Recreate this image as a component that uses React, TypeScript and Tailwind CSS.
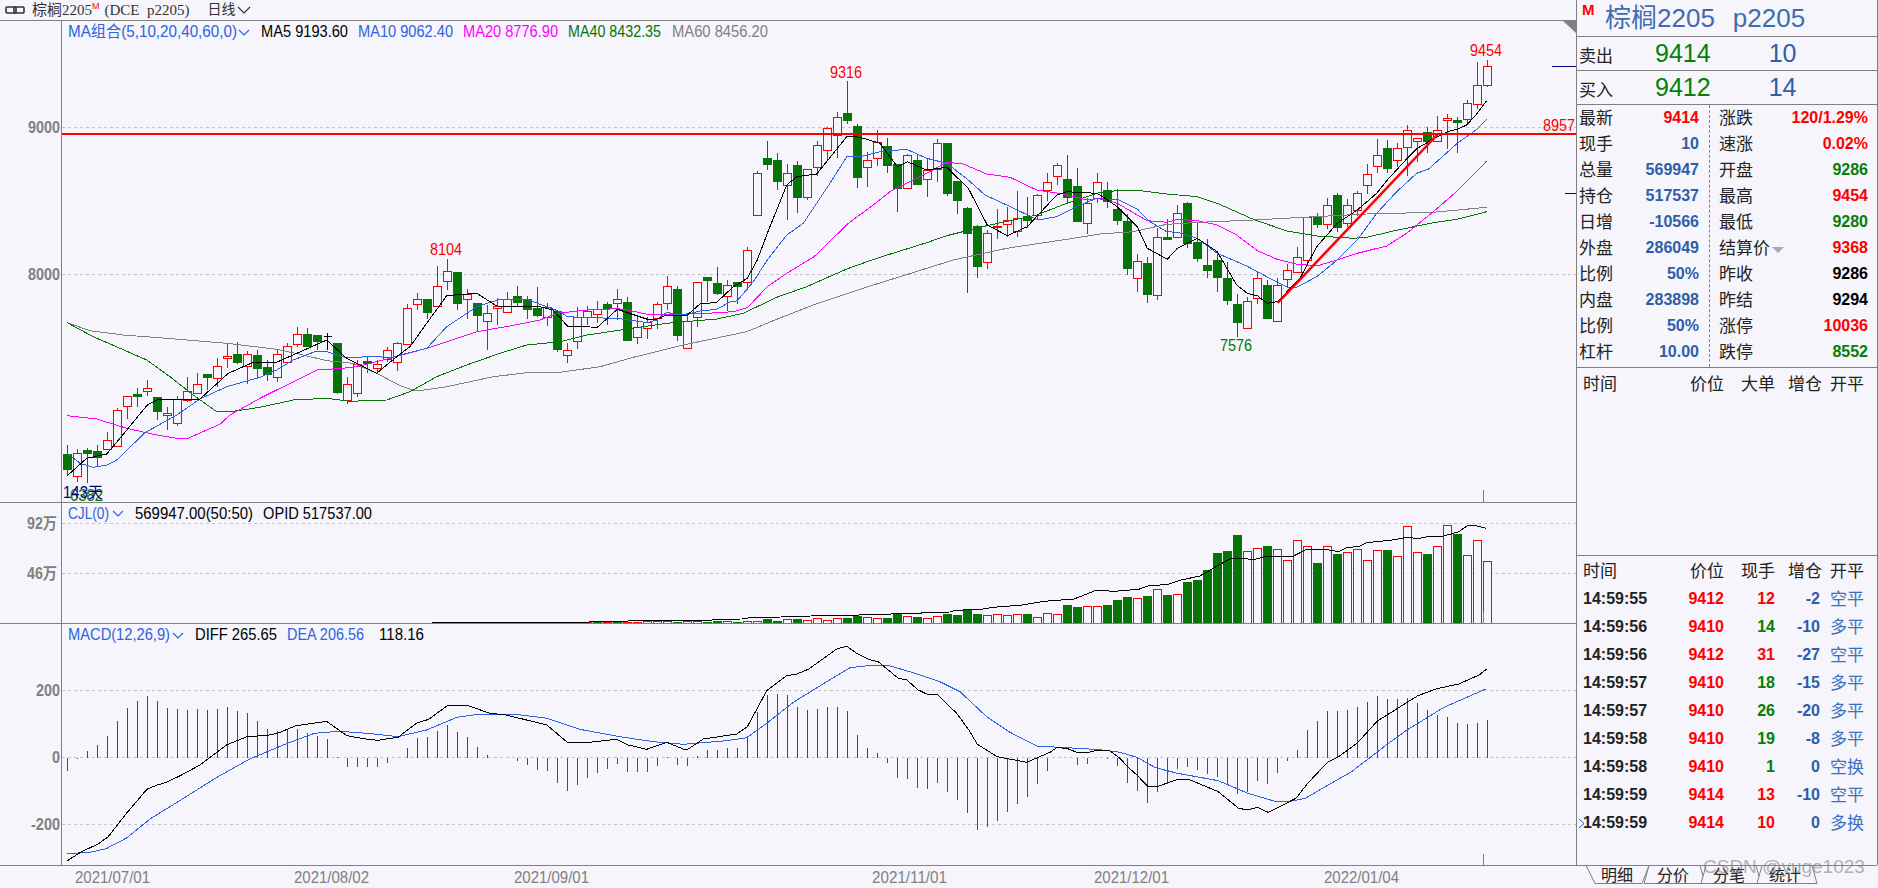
import type { ReactNode } from 'react';

const BG = '#f5f5fb';
const AXIS = '#808080';
const GRID = '#c4c4c4';
const RED = '#ff0000';
const GREEN = '#067406';
const BLUE = '#2f62e0';

// [high, bodyTop, bodyBottom, low, type] in page pixels; type 1 = up, 0 = down, 2 = doji
const candles: number[][] = [
  [445,454,469,475,0],[449,453,476,482,1],[448,450,453,483,0],[445,451,457,467,0],[432,440,449,449,1],
  [408,410,446,447,1],[396,396,406,419,1],[388,394,396,407,0],[380,388,391,396,1],[397,397,411,420,0],
  [407,413,415,430,1],[396,399,423,426,1],[377,391,400,402,1],[373,384,393,393,1],[374,374,377,390,0],
  [358,366,378,387,1],[344,356,358,368,1],[342,354,362,364,0],[351,354,366,384,1],[350,355,368,377,0],
  [360,367,374,381,0],[350,354,377,382,1],[343,346,362,364,1],[327,334,344,347,1],[328,334,346,346,0],
  [335,335,341,350,0],[333,336,336,350,2],[343,343,392,394,0],[377,384,400,404,1],[360,364,393,397,1],
  [356,361,363,373,0],[360,364,368,374,1],[347,350,359,362,1],[342,343,362,371,1],[304,308,344,345,1],
  [293,299,304,310,1],[299,299,312,319,0],[266,286,306,307,1],[259,271,281,290,1],[272,272,303,310,0],
  [289,294,299,319,1],[303,303,315,332,0],[305,313,321,350,1],[298,306,308,325,1],[292,299,312,312,1],
  [286,296,302,306,0],[296,299,309,319,0],[287,308,315,317,0],[303,307,317,326,1],[311,311,349,352,0],
  [343,350,355,363,1],[307,317,341,349,1],[306,311,317,325,1],[301,309,314,323,1],[302,304,308,325,0],
  [289,299,303,320,1],[297,302,340,340,0],[317,327,337,344,1],[317,322,328,339,1],[302,304,318,329,1],
  [276,286,303,310,1],[286,289,335,341,0],[315,321,348,349,1],[282,282,317,327,1],[277,277,280,302,0],
  [267,283,293,295,0],[280,285,296,311,1],[282,282,286,304,0],[247,250,282,290,1],[171,173,215,215,1],
  [141,158,164,170,0],[153,160,181,190,0],[164,173,185,220,1],[161,165,197,213,0],[169,169,197,200,1],
  [141,145,167,176,1],[127,128,150,161,1],[112,117,135,158,1],[81,113,120,124,0],[124,126,177,188,0],
  [152,160,167,187,1],[130,142,158,166,1],[138,146,165,173,0],[164,164,188,212,0],[154,155,188,189,1],
  [154,160,184,184,0],[158,170,179,197,1],[139,143,169,182,1],[143,143,193,196,0],[181,181,200,214,0],
  [207,208,233,293,0],[225,226,266,278,0],[230,233,262,269,1],[209,226,227,239,1],[207,220,224,237,1],
  [191,218,231,237,1],[197,216,220,228,0],[194,195,215,220,1],[173,182,190,201,1],[163,165,176,185,1],
  [155,179,197,202,0],[168,186,221,221,0],[198,203,223,234,1],[173,182,198,203,1],[182,190,201,208,0],
  [189,209,220,225,0],[214,221,268,275,0],[254,261,278,292,1],[257,263,294,303,0],[228,237,295,300,1],
  [219,237,239,240,0],[205,213,237,237,1],[202,203,243,248,0],[222,242,258,262,0],[239,265,270,278,0],
  [251,260,277,292,0],[262,278,300,305,0],[294,304,322,337,0],[297,301,328,328,1],[272,278,298,304,1],
  [280,285,318,319,0],[278,285,321,321,1],[264,270,279,287,1],[247,257,272,273,1],[217,217,260,265,1],
  [213,217,224,228,0],[198,205,224,229,1],[193,195,227,232,0],[199,205,223,227,1],[191,193,210,216,1],
  [164,174,185,194,1],[139,155,166,173,1],[140,148,168,173,0],[143,148,160,167,1],[125,130,147,176,1],
  [138,138,141,162,1],[127,132,141,153,0],[116,130,141,141,1],[114,118,120,149,1],[117,120,122,153,0],
  [100,103,119,123,1],[62,85,104,109,1],[60,66,85,87,1],
];

// bar height in pixels, positive = red outline, negative = green fill; index 49 is the first bar
const volumes: number[] = [
  1,1,0,1,-1,1,-1,1,1,2,1.3,1.3,-1.3,1.3,1.3,-1.3,-2.3,2,-1.3,2,2,-4.3,-2.3,4,-4.3,3,5,3,5,-5.3,-7,6,5,-5.3,-10,7,-6.3,5,7,
  -9.3,-8.3,-14.3,-9.3,8,9,8,8.7,-9,5.7,9.7,8.7,-18,-16,16.7,16.7,-18,-23,-26,24.7,-27,33.7,-28,28.7,-41,-43,-53,-70,-72,-88,
  71.7,74.7,-77,73.7,62.7,82.7,76.7,-60,76.7,-69,70.7,73.7,62.7,72.7,-73,66.7,96.7,70.7,-69,76.7,97.7,-89,67.7,82.7,61.7,
];

const macd: number[] = [
  -13,-1,7,13,22,37,50,57,62,57,50,49,48,49,48,49,51,47,45,37,29,27,28,29,25,22,19,1,-9,-9,-9,-9,-5,-0.5,10,20,21,27,33,26,21,11,3,0,-0.3,-3,-7,-12,-13,-25,-33,-27,-20,-15,-11,-6,
  -14,-14,-14,-8,1,-7,-8,2,8,8,10,10,20,46,63,64,63,51,48,49,51,51,47,23,10,5,-5,-20,-21,-30,-31,-25,-34,-42,-55,-72,-69,-63,-54,-46,-39,-26,-13,0,0,-7,-6,-0.5,-1,-8,
  -25,-33,-45,-34,-26,-11,-9,-12,-16,-19,-27,-36,-34,-23,-26,-15,-3,8,28,37,47,47,48,51,56,62,59,59,60,55,48,43,41,35,34,35,38,
];

// points are read off zoomed crops, so each run carries its crop origin and x scale
const run = (ox: number, oy: number, sx: number, pts: number[][]) =>
  pts.map(([x, y]) => `${(ox + x / sx).toFixed(1)},${(oy + y / 3).toFixed(1)}`).join(' ');

const ma5 = [
  run(60,230,3,[[22,737],[80,685],[140,672],[180,625],[262,525],[290,510],[420,507],[505,430],[580,397],[650,397],[800,330],[860,385],[900,405],[950,430],[1010,380],[1050,350],[1100,280],[1160,197],[1250,190],[1310,228],[1440,230],[1480,240]]),
  run(500,230,3,[[202,288],[292,292],[352,238],[442,268],[470,268],[500,255],[562,255],[600,222],[650,217],[700,170],[742,145]]),
  run(640,60,3,[[352,600],[382,520],[440,375],[470,350],[530,342],[622,228],[660,232],[720,250],[772,320],[802,305],[860,330],[920,322],[985,385],[1042,495],[1102,527],[1162,500],[1250,405],[1280,395],[1370,400]]),
  run(1100,30,3,[[0,495],[52,530],[112,590],[142,655],[202,688],[232,655],[292,625],[352,665],[410,765],[442,790],[472,797],[502,820],[532,815],[600,745],[650,650],[712,580],[772,540],[830,490],[862,450],[922,385],[952,355],[1012,320],[1042,305],[1072,298],[1100,285],[1132,250],[1160,212]]),
].join(' ');

const ma10 = [
  run(60,230,3,[[22,670],[60,700],[100,712],[140,705],[170,690],[255,608],[350,555],[420,507],[500,470],[600,442],[650,420],[700,390],[770,363],[800,365],[860,383],[900,382],[930,378],[990,383],[1100,355],[1160,290],[1250,230],[1320,208],[1400,208],[1500,245]]),
  run(500,230,3,[[202,260],[262,263],[352,265],[442,278],[470,270],[500,247],[532,255],[562,253],[600,243],[650,238],[690,216],[712,212],[760,155]]),
  run(640,60,3,[[382,600],[440,525],[490,490],[560,385],[622,288],[660,290],[720,275],[800,268],[860,295],[920,310],[985,360],[1035,405],[1100,435],[1195,480],[1250,470],[1310,440],[1370,415]]),
  run(1100,30,3,[[0,507],[52,507],[112,537],[150,575],[200,605],[232,607],[292,625],[352,670],[440,708],[500,740],[562,772],[590,772],[650,740],[712,690],[772,630],[830,550],[890,485],[950,430],[985,418],[1072,340],[1132,297],[1160,268]]),
].join(' ');

const ma20 = [
  run(60,230,3,[[22,557],[110,567],[200,595],[290,615],[350,625],[385,625],[440,600],[480,583],[510,555],[600,505],[700,455],[770,420],[850,415],[900,408],[1000,382],[1100,355],[1160,335],[1250,305],[1350,288],[1440,270]]),
  run(500,230,3,[[172,250],[262,240],[352,236],[382,240],[442,253],[532,253],[622,250],[700,245],[742,233]]),
  run(640,60,3,[[382,680],[440,640],[522,590],[625,490],[700,435],[750,395],[860,340],[920,307],[970,312],[1040,342],[1110,352],[1190,390],[1270,402],[1340,420]]),
  run(1100,30,3,[[0,505],[52,520],[112,555],[142,572],[202,577],[232,568],[292,572],[352,585],[410,615],[472,662],[532,688],[592,703],[652,707],[712,690],[772,670],[860,648],[920,610],[1000,545],[1072,483],[1160,393]]),
].join(' ');

const ma40 = [
  run(60,230,3,[[22,278],[100,320],[180,355],[260,390],[330,440],[400,495],[470,545],[520,544],[600,532],[700,510],[800,505],[870,514],[980,510],[1050,485],[1130,440],[1220,405],[1320,370],[1400,345],[1500,335]]),
  run(500,230,3,[[262,315],[382,297],[500,280],[650,267],[730,250]]),
  run(640,60,3,[[410,712],[500,680],[620,627],[710,595],[860,548],[920,527],[1040,497],[1190,465],[1280,430]]),
  run(1100,30,3,[[0,487],[52,482],[112,481],[202,492],[292,500],[352,520],[460,568],[560,603],[652,618],[760,625],[800,622],[880,603],[1000,578],[1072,568],[1160,545]]),
].join(' ');

const ma60 = [
  run(60,230,3,[[22,278],[90,302],[190,315],[320,325],[500,340],[650,358],[720,373],[800,392],[880,400],[950,430],[1020,467],[1070,483],[1160,470],[1300,440],[1400,428],[1500,427]]),
  run(500,230,3,[[300,410],[400,382],[550,345],[740,305]]),
  run(640,60,3,[[410,778],[520,735],[700,675],[940,600],[1100,565],[1300,535]]),
  run(1100,30,3,[[0,612],[100,605],[200,583],[300,577],[460,570],[610,562],[800,552],[1000,547],[1160,532]]),
].join(' ');

const volLine = [
  run(0,600,2.45,[[1058,68],[1378,68]]),
  run(640,550,3,[[0,212],[215,211],[217,208],[305,207],[337,202],[425,201],[427,199],[515,198],[517,196],[640,197],[675,193],[755,192],[758,189],[845,189],[847,187],[930,186],[945,181],[1025,178],[1060,172]]),
  run(1000,500,2.703,[[60,315],[120,304],[200,297],[260,271],[310,274],[375,268],[400,258],[455,253],[490,240],[540,228],[600,190],[625,175],[690,178],[715,170],[790,170],[830,147],[890,150],[915,155],[940,142],[970,140],[990,128],[1060,120],[1100,112],[1130,116],[1160,109],[1200,108],[1240,95],[1265,76],[1290,78],[1315,85]]),
].join(' ');

const diff = [
  run(0,600,2.45,[[165,782],[200,755],[240,732],[265,710],[310,640],[360,568],[385,555],[405,548],[440,528],[490,495],[555,435],[605,410],[655,406],[680,400],[725,377],[800,364],[850,407],[900,418],[925,421],[975,412],[1020,370],[1050,358],[1097,316],[1145,316],[1200,340],[1240,345],[1340,375],[1390,427],[1445,427],[1510,418]]),
  run(620,625,3,[[0,348],[25,360],[80,373],[140,352],[190,372],[205,372],[250,342],[310,333],[350,327],[382,305],[412,250],[440,197],[500,152],[530,147],[565,133],[650,72],[680,64],[710,85],[745,103],[775,110],[835,160],[860,165],[895,195],[920,207],[950,207],[1010,265],[1050,320],[1072,358],[1132,395],[1220,412],[1290,382],[1310,368],[1340,370],[1370,382],[1400,384],[1432,375],[1470,378],[1500,400]]),
  run(1000,500,2.703,[[345,800],[370,825],[400,860],[430,858],[480,838],[510,838],[590,875],[645,925],[670,930],[695,922],[725,937],[800,895],[830,852],[885,787],[915,770],[965,730],[1020,663],[1075,625],[1128,588],[1180,566],[1240,552],[1295,525],[1315,508]]),
].join(' ');

const dea = [
  run(0,600,2.45,[[165,761],[220,757],[260,746],[310,714],[370,655],[430,610],[530,533],[610,478],[700,432],[770,400],[830,394],[900,400],[975,410],[1045,390],[1120,352],[1170,343],[1270,344],[1340,355],[1420,388],[1510,408]]),
  run(620,625,3,[[0,335],[100,350],[190,358],[320,347],[380,338],[440,295],[520,232],[620,170],[690,128],[760,120],[800,120],[880,143],[960,170],[1020,200],[1100,275],[1170,322],[1250,363],[1340,368],[1440,374],[1500,382]]),
  run(1000,500,2.703,[[370,772],[420,803],[480,820],[590,842],[670,880],[740,903],[790,903],[825,895],[950,815],[1050,730],[1100,690],[1200,622],[1315,566]]),
].join(' ');

const quoteRows = [
  ['最新','9414','text-[#ff0000]','涨跌','120/1.29%','text-[#ff0000]'],
  ['现手','10','text-[#2f5ea8]','速涨','0.02%','text-[#ff0000]'],
  ['总量','569947','text-[#2f5ea8]','开盘','9286','text-[#067f06]'],
  ['持仓','517537','text-[#2f5ea8]','最高','9454','text-[#ff0000]'],
  ['日增','-10566','text-[#2f5ea8]','最低','9280','text-[#067f06]'],
  ['外盘','286049','text-[#2f5ea8]','结算价','9368','text-[#ff0000]'],
  ['比例','50%','text-[#2f5ea8]','昨收','9286','text-black'],
  ['内盘','283898','text-[#2f5ea8]','昨结','9294','text-black'],
  ['比例','50%','text-[#2f5ea8]','涨停','10036','text-[#ff0000]'],
  ['杠杆','10.00','text-[#2f5ea8]','跌停','8552','text-[#067f06]'],
];

const ticks = [
  ['14:59:55','9412','12','text-[#ff0000]','-2','空平'],
  ['14:59:56','9410','14','text-[#067f06]','-10','多平'],
  ['14:59:56','9412','31','text-[#ff0000]','-27','空平'],
  ['14:59:57','9410','18','text-[#067f06]','-15','多平'],
  ['14:59:57','9410','26','text-[#067f06]','-20','多平'],
  ['14:59:58','9410','19','text-[#067f06]','-8','多平'],
  ['14:59:58','9410','1','text-[#067f06]','0','空换'],
  ['14:59:59','9414','13','text-[#ff0000]','-10','空平'],
  ['14:59:59','9414','10','text-[#ff0000]','0','多换'],
];

const cx = (k: number) => 67.5 + 10 * k;

function Txt({ x, y, w, fill, size = 16, bold, children }: { x: number; y: number; w: number; fill: string; size?: number; bold?: boolean; children: ReactNode }) {
  return (
    <text x={x} y={y} dominantBaseline="central" textLength={w} lengthAdjust="spacingAndGlyphs" fill={fill} fontSize={size} fontWeight={bold ? 700 : 400}>
      {children}
    </text>
  );
}

function Chevron({ x, y }: { x: number; y: number }) {
  return <polyline points={`${x},${y} ${x + 5},${y + 5} ${x + 10},${y}`} fill="none" stroke={BLUE} strokeWidth={1.2} />;
}

function Grid({ y }: { y: number }) {
  return <line x1={62} x2={1576} y1={y + 0.5} y2={y + 0.5} stroke={GRID} strokeDasharray="3 3" shapeRendering="crispEdges" />;
}

function Line({ points, stroke }: { points: string; stroke: string }) {
  return <polyline points={points} fill="none" stroke={stroke} strokeWidth={1} shapeRendering="crispEdges" />;
}

function Panel({ top, height, children }: { top: number; height: number; children: ReactNode }) {
  return (
    <svg width={1576} height={height} viewBox={`0 ${top} 1576 ${height}`} className="block font-['Liberation_Sans','Noto_Sans_CJK_SC',sans-serif]">
      <line x1={61.5} x2={61.5} y1={top} y2={top + height} stroke={AXIS} shapeRendering="crispEdges" />
      {children}
    </svg>
  );
}

function PricePanel() {
  return (
    <Panel top={21} height={481}>
      <Grid y={127} />
      <Grid y={274} />
      <Txt x={28} y={127} w={32} fill={AXIS} bold>9000</Txt>
      <Txt x={28} y={274} w={32} fill={AXIS} bold>8000</Txt>

      <Txt x={68} y={31} w={169} fill={BLUE}>MA组合(5,10,20,40,60,0)</Txt>
      <Chevron x={239} y={30} />
      <Txt x={261} y={31} w={87} fill="#000000">MA5 9193.60</Txt>
      <Txt x={358} y={31} w={95} fill={BLUE}>MA10 9062.40</Txt>
      <Txt x={463} y={31} w={95} fill="#ff00ff">MA20 8776.90</Txt>
      <Txt x={568} y={31} w={93} fill="#067406">MA40 8432.35</Txt>
      <Txt x={672} y={31} w={96} fill={AXIS}>MA60 8456.20</Txt>

      <g shapeRendering="crispEdges">
        {candles.map(([hi, top, bot, lo, type], k) => {
          const x = cx(k);
          const color = type === 1 ? RED : type === 2 ? '#000000' : GREEN;
          return (
            <g key={k}>
              <line x1={x} x2={x} y1={hi} y2={top} stroke={color} />
              <line x1={x} x2={x} y1={bot} y2={lo} stroke={color} />
              {type === 1 && <rect x={x - 4} y={top + 0.5} width={8} height={bot - top} fill={BG} stroke={RED} />}
              {type === 0 && <rect x={x - 4.5} y={top} width={9} height={bot - top + 1} fill={GREEN} />}
              {type === 2 && <line x1={x - 4} x2={x + 4} y1={top + 0.5} y2={top + 0.5} stroke="#000000" />}
            </g>
          );
        })}
      </g>

      <Line points={ma60} stroke="#808080" />
      <Line points={ma40} stroke="#067406" />
      <Line points={ma20} stroke="#ff00ff" />
      <Line points={ma10} stroke={BLUE} />
      <Line points={ma5} stroke="#000000" />

      <line x1={62} x2={1576} y1={134} y2={134} stroke={RED} strokeWidth={2} shapeRendering="crispEdges" />
      <line x1={1277.7} y1={303} x2={1438} y2={134} stroke={RED} strokeWidth={2.5} />
      <line x1={1552} x2={1576} y1={66.5} y2={66.5} stroke="#000080" shapeRendering="crispEdges" />
      <line x1={1565} x2={1576} y1={193.5} y2={193.5} stroke="#000080" shapeRendering="crispEdges" />
      <polygon points="1563,21 1576,21 1576,33" fill={AXIS} />
      <line x1={1483.5} x2={1483.5} y1={490} y2={502} stroke={AXIS} shapeRendering="crispEdges" />

      <Txt x={430} y={249} w={32} fill={RED}>8104</Txt>
      <Txt x={830} y={72} w={32} fill={RED}>9316</Txt>
      <Txt x={1470} y={50} w={32} fill={RED}>9454</Txt>
      <Txt x={1220} y={345} w={32} fill="#067406">7576</Txt>
      <Txt x={1543} y={125} w={32} fill={RED}>8957</Txt>
      <Txt x={70} y={495} w={33} fill="#067406">6382</Txt>
      <Txt x={63} y={492} w={40} fill="#000080">143天</Txt>
    </Panel>
  );
}

function VolumePanel() {
  return (
    <Panel top={503} height={120}>
      <Grid y={523} />
      <Grid y={573} />
      <Txt x={27} y={523} w={30} fill={AXIS} bold>92万</Txt>
      <Txt x={27} y={573} w={30} fill={AXIS} bold>46万</Txt>
      <Txt x={68} y={513} w={41} fill={BLUE}>CJL(0)</Txt>
      <Chevron x={113} y={511} />
      <Txt x={135} y={513} w={118} fill="#000000">569947.00(50:50)</Txt>
      <Txt x={263} y={513} w={109} fill="#000000">OPID 517537.00</Txt>
      <g shapeRendering="crispEdges">
        {volumes.map((h, i) => {
          const x = cx(49 + i);
          if (h === 0) return null;
          return h > 0
            ? <rect key={i} x={x - 4} y={623 - h} width={8} height={h + 2} fill={BG} stroke={RED} />
            : <rect key={i} x={x - 4.5} y={623 + h} width={9} height={-h} fill={GREEN} />;
        })}
      </g>
      <Line points={volLine} stroke="#000000" />
      <line x1={1483.5} x2={1483.5} y1={612} y2={623} stroke={AXIS} shapeRendering="crispEdges" />
    </Panel>
  );
}

function MacdPanel() {
  return (
    <Panel top={624} height={241}>
      <Grid y={690} />
      <Grid y={757} />
      <Grid y={824} />
      <Txt x={36} y={690} w={24} fill={AXIS} bold>200</Txt>
      <Txt x={52} y={757} w={8} fill={AXIS} bold>0</Txt>
      <Txt x={31} y={824} w={29} fill={AXIS} bold>-200</Txt>
      <Txt x={68} y={634} w={102} fill={BLUE}>MACD(12,26,9)</Txt>
      <Chevron x={173} y={633} />
      <Txt x={195} y={634} w={82} fill="#000000">DIFF 265.65</Txt>
      <Txt x={287} y={634} w={77} fill={BLUE}>DEA 206.56</Txt>
      <Txt x={379} y={634} w={45} fill="#000000">118.16</Txt>
      <g shapeRendering="crispEdges">
        {macd.map((v, k) => (
          v === 0 ? null : <line key={k} x1={cx(k)} x2={cx(k)} y1={757.5} y2={757.5 - v} stroke={v > 0 ? '#ee0000' : '#0a7a0a'} />
        ))}
      </g>
      <Line points={dea} stroke={BLUE} />
      <Line points={diff} stroke="#000000" />
      <line x1={1483.5} x2={1483.5} y1={854} y2={865} stroke={AXIS} shapeRendering="crispEdges" />
    </Panel>
  );
}

function DateAxis() {
  const dates = [
    ['2021/07/01', 75], ['2021/08/02', 294], ['2021/09/01', 514],
    ['2021/11/01', 872], ['2021/12/01', 1094], ['2022/01/04', 1324],
  ] as const;
  return (
    <svg width={1576} height={22} viewBox="0 866 1576 22" className="block font-['Liberation_Sans','Noto_Sans_CJK_SC',sans-serif]">
      {dates.map(([d, x]) => <Txt key={d} x={x} y={877} w={75} fill={AXIS}>{d}</Txt>)}
    </svg>
  );
}

function TopBar() {
  return (
    <div className="flex h-[21px] items-center border-b border-[#808080] pl-[5px] font-['Liberation_Serif','Noto_Sans_CJK_SC',serif] text-[#333]">
      <svg width={20} height={8} viewBox="0 0 20 8" fill="none" stroke="#333" strokeWidth={1.6}>
        <rect x={1} y={1} width={10} height={6} rx={1} />
        <rect x={9} y={1} width={10} height={6} rx={1} />
      </svg>
      <span className="ml-[7px] text-[15px] leading-none">棕榈2205</span>
      <span className="-mt-[8px] text-[9px] font-['Liberation_Sans'] leading-none text-[#ff0000]">M</span>
      <span className="ml-[5px] w-[84px] text-[15px] leading-none whitespace-pre">(DCE  p2205)</span>
      <span className="ml-[19px] text-[14px] leading-none">日线</span>
      <svg width={14} height={8} viewBox="0 0 14 8" fill="none" stroke="#333" strokeWidth={1.2} className="ml-[1px]">
        <polyline points="1,1 7,7 13,1" />
      </svg>
    </div>
  );
}

function QuotePanel() {
  return (
    <div className="shrink-0">
      <div className="relative flex h-[37px] items-center border-b border-[#808080]">
        <span className="absolute left-[5px] top-[2px] text-[15px] font-bold leading-none text-[#ff0000]">M</span>
        <span className="ml-[28px] text-[26px] leading-none text-[#3f6cb0]">棕榈2205</span>
        <span className="ml-[18px] text-[26px] leading-none text-[#3f6cb0]">p2205</span>
      </div>
      {[['卖出', '9414', '10'], ['买入', '9412', '14']].map(([label, price, size]) => (
        <div key={label} className="flex h-[34px] items-center border-b border-[#808080]">
          <span className="ml-[2px] mt-[5px] w-[76px] text-[17px] leading-none text-[#222]">{label}</span>
          <span className="text-[25px] leading-none text-[#067f06]">{price}</span>
          <span className="ml-[58px] text-[25px] leading-none text-[#2f5ea8]">{size}</span>
        </div>
      ))}
      <div className="flex h-[263px] border-b border-[#808080]">
        <div className="w-[133px] border-r border-dashed border-[#808080] pr-[10px] pl-[2px]">
          {quoteRows.map((r, i) => (
            <div key={i} className="flex h-[26px] items-center justify-between">
              <span className="text-[17px] leading-none text-[#222]">{r[0]}</span>
              <span className={`text-[16px] font-bold leading-none ${r[2]}`}>{r[1]}</span>
            </div>
          ))}
        </div>
        <div className="flex-1 pr-[9px] pl-[9px]">
          {quoteRows.map((r, i) => (
            <div key={i} className="flex h-[26px] items-center justify-between">
              <span className="flex items-center text-[17px] leading-none text-[#222]">
                {r[3]}
                {r[3] === '结算价' && <span className="mt-[4px] ml-[2px] h-0 w-0 border-x-[6px] border-t-[6px] border-x-transparent border-t-[#aaa]" />}
              </span>
              <span className={`text-[16px] font-bold leading-none ${r[5]}`}>{r[4]}</span>
            </div>
          ))}
        </div>
      </div>
    </div>
  );
}

const tickCols = 'grid grid-cols-[108px_33px_51px_45px_44px] items-center whitespace-nowrap pl-[6px]';

function TickHeader({ big }: { big: string }) {
  return (
    <div className={`${tickCols} text-[17px] leading-none text-[#222]`}>
      <span>时间</span>
      <span className="justify-self-end">价位</span>
      <span className="justify-self-end">{big}</span>
      <span className="justify-self-end -mr-[2px]">增仓</span>
      <span className="pl-[10px]">开平</span>
    </div>
  );
}

function TabStrip() {
  const tabs = [
    { label: '明细', x: 1618, pts: '1587,0 1596,18 1643,18 1650,0' },
    { label: '分价', x: 1674, pts: '1645,18 1650,0 1701,0 1706,18' },
    { label: '分笔', x: 1730, pts: '1702,18 1707,0 1757,0 1762,18' },
    { label: '统计', x: 1786, pts: '1758,18 1763,0 1813,0 1818,18' },
  ];
  return (
    <svg width={301} height={23} viewBox="1577 865 301 23" className="block font-['Liberation_Sans','Noto_Sans_CJK_SC',sans-serif]">
      <line x1={1577} x2={1587} y1={865.5} y2={865.5} stroke={AXIS} shapeRendering="crispEdges" />
      <line x1={1650} x2={1878} y1={865.5} y2={865.5} stroke={AXIS} shapeRendering="crispEdges" />
      {tabs.map((t) => (
        <g key={t.label}>
          <polygon points={t.pts} transform="translate(0,865.5)" fill={BG} stroke={AXIS} />
          <text x={t.x} y={875} textAnchor="middle" dominantBaseline="central" fontSize={16} fill="#222">{t.label}</text>
        </g>
      ))}
    </svg>
  );
}

export default function App() {
  return (
    <div className="relative flex h-[888px] w-[1878px] overflow-hidden bg-[#f5f5fb] font-['Liberation_Sans','Noto_Sans_CJK_SC',sans-serif]">
      <div className="flex w-[1576px] shrink-0 flex-col">
        <TopBar />
        <div className="border-b border-[#808080]"><PricePanel /></div>
        <div className="border-b border-[#808080]"><VolumePanel /></div>
        <div className="border-b border-[#808080]"><MacdPanel /></div>
        <DateAxis />
      </div>
      <div className="flex w-[302px] flex-col">
        <div className="flex h-[865px] flex-col border-x border-[#808080]">
          <QuotePanel />
          <div className="h-[188px] shrink-0 border-b border-[#808080] pt-[8px]">
            <TickHeader big="大单" />
          </div>
          <div className="relative flex-1 pt-[7px]">
            <TickHeader big="现手" />
            <div className="mt-[5px]">
              {ticks.map((t, i) => (
                <div key={i} className={`${tickCols} h-[28px] text-[16px] font-bold leading-none`}>
                  <span className="text-[#222]">{t[0]}</span>
                  <span className="justify-self-end text-[#ff0000]">{t[1]}</span>
                  <span className={`justify-self-end ${t[3]}`}>{t[2]}</span>
                  <span className="justify-self-end text-[#2f5ea8]">{t[4]}</span>
                  <span className="pl-[10px] text-[17px] font-normal text-[#3a70c0]">{t[5]}</span>
                </div>
              ))}
            </div>
            <svg width={7} height={11} viewBox="0 0 7 11" fill="none" stroke="#2f5ea8" className="absolute left-[1px] top-[262px]">
              <polyline points="1,1 6,5.5 1,10" />
            </svg>
          </div>
        </div>
        <TabStrip />
      </div>
      <span className="absolute left-[1703px] top-[857px] text-[19px] leading-none whitespace-nowrap text-[#80808099]">CSDN @yuge1023</span>
    </div>
  );
}
